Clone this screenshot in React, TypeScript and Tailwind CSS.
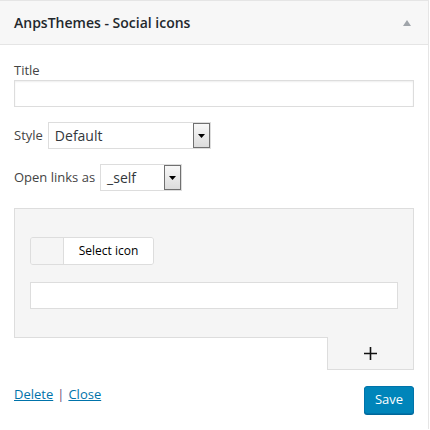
import React from "react";

const FONT = { fontFamily: '"Open Sans", "Liberation Sans", sans-serif' };

// Native-looking select with the old grey arrow button
const FakeSelect = ({ value, width }: { value: string; width: string }) => (
  <div
    className={`flex h-[27px] items-stretch border border-[#dddddd] bg-white ${width}`}
  >
    <span className="flex-1 pl-[6px] text-[14px] leading-[25px] text-[#32373c]">
      {value}
    </span>
    <span className="flex w-[17px] items-center justify-center border border-[#707070] bg-gradient-to-b from-[#f8f8f8] to-[#dcdcdc]">
      <svg width="7" height="4" viewBox="0 0 7 4">
        <path d="M0 0h7L3.5 4z" fill="#000" />
      </svg>
    </span>
  </div>
);

export default function App() {
  return (
    <div className="h-[430px] w-[430px] bg-white text-[#444]" style={FONT}>
      <div className="w-[429px] border-r border-t border-[#e5e5e5]">
        {/* Widget header */}
        <div className="flex h-[44px] items-center justify-between border-b border-[#e5e5e5] bg-[#f7f7f7] pl-[14px] pr-[17px]">
          <span className="text-[14px] font-semibold text-[#23282d]">
            AnpsThemes - Social icons
          </span>
          <svg width="8" height="6" viewBox="0 0 8 6">
            <path d="M4 0L8 6H0z" fill="#a0a5aa" />
          </svg>
        </div>

        <div className="px-[14px] pb-[15px] pt-[15px]">
          <div className="text-[13px] leading-[20px]">Title</div>
          <div className="h-[27px] w-[400px] border border-[#dddddd] bg-white shadow-[inset_0_1px_2px_rgba(0,0,0,0.07)]" />

          <div className="mt-[15px] flex items-center gap-[5px]">
            <span className="text-[13px]">Style</span>
            <FakeSelect value="Default" width="w-[163px]" />
          </div>

          <div className="mt-[15px] flex items-center gap-[5px]">
            <span className="text-[13px]">Open links as</span>
            <FakeSelect value="_self" width="w-[82px]" />
          </div>

          {/* Social icons repeater */}
          <div className="mt-[17px] flex w-[400px] flex-col">
            <div className="h-[130px] border border-[#dddddd] bg-[#f5f5f5] px-[15px] pt-[28px]">
              <div className="flex h-[28px] w-[124px] overflow-hidden rounded-[3px] border border-[#dddddd]">
                <span className="w-[33px] border-r border-[#dddddd] bg-[#f5f5f5]" />
                <span className="flex flex-1 items-center justify-center bg-white text-[12px] text-black">
                  Select icon
                </span>
              </div>
              <div className="mt-[17px] h-[27px] w-[368px] border border-[#dddddd] bg-white" />
            </div>
            <div className="-mt-px flex h-[33px] w-[87px] items-center justify-center self-end border border-t-0 border-[#dddddd] bg-[#f5f5f5]">
              <svg width="13" height="13" viewBox="0 0 13 13">
                <path d="M6.5 0v13M0 6.5h13" stroke="#111" strokeWidth="1.6" />
              </svg>
            </div>
          </div>

          {/* Footer */}
          <div className="mt-[14px] flex w-[400px] items-start justify-between">
            <div className="text-[13px] leading-[20px]">
              <a href="#" className="text-[#0073aa] underline">
                Delete
              </a>
              <span className="mx-[4px] text-[#6c4a78]">|</span>
              <a href="#" className="text-[#0073aa] underline">
                Close
              </a>
            </div>
            <button className="mt-[2px] h-[28px] w-[50px] rounded-[3px] border border-[#0073aa] bg-[#0085ba] text-[13px] text-white shadow-[0_1px_0_#006799]">
              Save
            </button>
          </div>
        </div>
      </div>
    </div>
  );
}
